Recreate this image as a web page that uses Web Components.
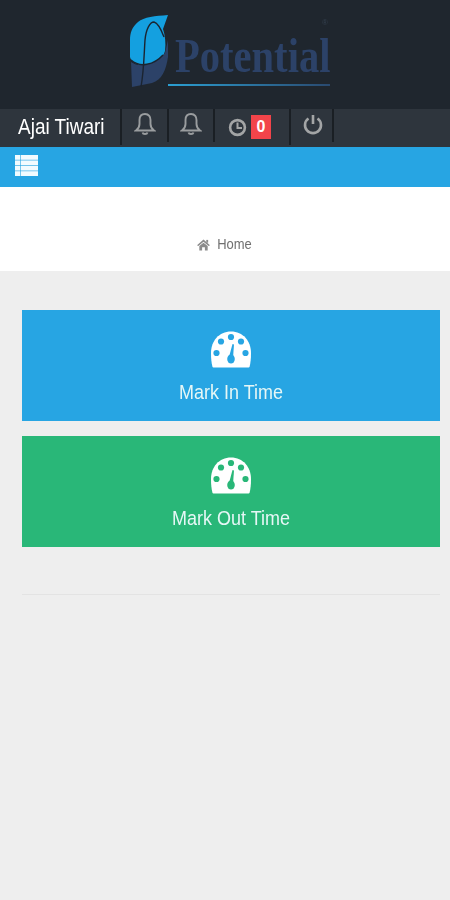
<!DOCTYPE html>
<html>
<head>
<meta charset="utf-8">
<title>Potential</title>
<style>
html, body { margin: 0; padding: 0; }
body { width: 450px; height: 900px; overflow: hidden; background: #eeeeee; font-family: "Liberation Sans", Arial, sans-serif; }
</style>
</head>
<body>
<logo-header></logo-header>
<user-bar name="Ajai Tiwari" count="0"></user-bar>
<menu-bar></menu-bar>
<bread-crumb>Home</bread-crumb>
<main-area>
    <action-tile color="#27a5e3">Mark In Time</action-tile>
    <action-tile color="#29b778">Mark Out Time</action-tile>
</main-area>

<script>
class LogoHeader extends HTMLElement {
    constructor() {
        super();
        this.attachShadow({ mode: "open" });
        this.shadowRoot.innerHTML = `
            <style>
            :host { display: flex; justify-content: center; height: 109px; background: #1f262e; }
            .logo { display: flex; align-items: flex-start; padding: 15px 0 0 10px; filter: blur(.5px); }
            svg { display: block; flex: none; }
            .word { position: relative; margin: 17px 0 0 -2px; width: 162px; }
            .name { display: block; margin-left: 7px; font: bold 48px/48px "Liberation Serif", serif; color: #2c4268; transform: scaleX(.845); transform-origin: left top; white-space: nowrap; height: 48px; }
            .line { height: 2px; margin-top: 4px; background: linear-gradient(90deg, #2b9fd2, #2a4a70); }
            .reg { position: absolute; right: 2px; top: -13px; font: 8px/8px "Liberation Sans", sans-serif; color: #34404f; }
            </style>
            <div class="logo">
                <svg width="40" height="74" viewBox="0 0 40 74">
                    <path d="M38 0 C25 1 14 2 8 7 C2 12 0 18 0 25 L0 42 C1 47 7 50 14 50 C24 50 33 44 35 36 C36 28 35 20 33 14Z" fill="#14a0e0"/>
                    <path d="M1 47 C8 52 22 53 35 38 L38 25 L38 42 C36 55 32 65 22 68 L2 72Z" fill="#2c4268"/>
                    <path d="M11 72 C14 55 14 40 15 25 C16 14 20 7 24 7 C28 8 31 14 34 22 M1 45 C10 53 24 50 33 40" fill="none" stroke="#1b2430" stroke-width="1.400"/>
                </svg>
                <div class="word">
                    <span class="name">Potential</span>
                    <span class="reg">®</span>
                    <div class="line"></div>
                </div>
            </div>
        `;
    }
}

class UserBar extends HTMLElement {
    constructor() {
        super();
        this.attachShadow({ mode: "open" });
        const bell = `<svg width="22" height="24" viewBox="0 0 22 24" fill="none" stroke="#9a9d9f" stroke-width="1.9"><path d="M11 2 C7 2 5.5 5 5.5 8 L5.5 12 C5.5 15 4 17 2 18.5 L20 18.5 C18 17 16.5 15 16.5 12 L16.5 8 C16.5 5 15 2 11 2Z"/><path d="M8.5 20.5 C9 22.5 13 22.5 13.5 20.5"/></svg>`;
        this.shadowRoot.innerHTML = `
            <style>
            :host { display: flex; height: 38px; background: #2e353d; color: #fff; }
            .cell { display: flex; align-items: center; justify-content: center; box-sizing: border-box; height: 33px; border-right: 2px solid #1a1f24; }
            .name { width: 122px; justify-content: flex-start; padding-left: 18px; font-size: 19px; white-space: nowrap; height: 36px; }
            .name span { transform: scaleY(1.12); filter: blur(.4px); }
            .bell { padding-bottom: 3px; }
            .clock { width: 76px; height: 36px; gap: 3px; padding: 0 6px 0 0; }
            .power { width: 43px; padding: 0 0 4px 2px; }
            .badge { width: 20px; height: 24px; background: #f2444a; font: bold 16px/24px "Liberation Sans", sans-serif; text-align: center; }
            svg { display: block; filter: blur(.4px); }
            </style>
            <div class="cell name"><span>${this.getAttribute("name")}</span></div>
            <div class="cell bell" style="width:47px">${bell}</div>
            <div class="cell bell" style="width:46px">${bell}</div>
            <div class="cell clock">
                <svg width="21" height="21" viewBox="0 0 21 21" fill="none" stroke="#a3a5a6" stroke-width="2.6"><circle cx="10.5" cy="10.5" r="7.4"/><path d="M10.5 5.5 V11 H15" stroke-width="2"/></svg>
                <span class="badge">${this.getAttribute("count")}</span>
            </div>
            <div class="cell power">
                <svg width="22" height="24" viewBox="0 0 22 24" fill="none" stroke="#a3a5a6" stroke-width="2.6"><path d="M6.5 6.5 A8 8 0 1 0 15.5 6.5"/><path d="M11 3 V12"/></svg>
            </div>
        `;
    }
}

class MenuBar extends HTMLElement {
    constructor() {
        super();
        this.attachShadow({ mode: "open" });
        this.shadowRoot.innerHTML = `
            <style>
            :host { display: flex; align-items: center; height: 40px; padding: 0 0 0 15px; background: #27a5e3; }
            svg { display: block; margin-bottom: 3px; filter: blur(.3px); }
            </style>
            <svg width="23" height="21" viewBox="0 0 23 21" fill="#f2fbff">
                <rect x="0" y="0" width="5" height="4.800"/><rect x="5.600" y="0" width="17.400" height="4.800"/>
                <rect x="0" y="5.400" width="5" height="4.800"/><rect x="5.600" y="5.400" width="17.400" height="4.800"/>
                <rect x="0" y="10.800" width="5" height="4.800"/><rect x="5.600" y="10.800" width="17.400" height="4.800"/>
                <rect x="0" y="16.200" width="5" height="4.800"/><rect x="5.600" y="16.200" width="17.400" height="4.800"/>
            </svg>
        `;
    }
}

class BreadCrumb extends HTMLElement {
    constructor() {
        super();
        this.attachShadow({ mode: "open" });
        this.shadowRoot.innerHTML = `
            <style>
            :host { display: flex; justify-content: center; align-items: flex-end; box-sizing: border-box; height: 84px; padding: 0 0 18px 0; background: #fff; color: #707070; font-size: 13px; line-height: 16px; }
            .wrap { display: flex; align-items: center; gap: 7px; margin-left: -1px; filter: blur(.5px); }
            span { display: block; transform: scaleY(1.12); }
            svg { display: block; }
            </style>
            <div class="wrap">
                <svg width="13" height="12" viewBox="0 0 14 12" fill="#8b8b8b"><path d="M7 0 L14 6.200 L12.500 7 L7 2.500 L1.500 7 L0 6.200Z"/><path d="M2.500 7.200 L7 3.500 L11.500 7.200 V12 H8.500 V8.500 H5.500 V12 H2.500Z"/><rect x="10" y="0.500" width="2" height="3"/></svg>
                <span><slot></slot></span>
            </div>
        `;
    }
}

class MainArea extends HTMLElement {
    constructor() {
        super();
        this.attachShadow({ mode: "open" });
        this.shadowRoot.innerHTML = `
            <style>
            :host { display: block; box-sizing: border-box; height: 629px; padding: 39px 10px 0 22px; background: #eeeeee; }
            .list { display: flex; flex-direction: column; gap: 15px; }
            hr { border: 0; height: 1px; background: #e3e3e3; margin: 47px 0 0 0; }
            </style>
            <div class="list"><slot></slot></div>
            <hr>
        `;
    }
}

class ActionTile extends HTMLElement {
    constructor() {
        super();
        this.attachShadow({ mode: "open" });
        const color = this.getAttribute("color");
        this.shadowRoot.innerHTML = `
            <style>
            :host { display: flex; flex-direction: column; align-items: center; height: 111px; box-sizing: border-box; padding-top: 21px; background: ${color}; color: #e6f7f6; font-size: 18px; line-height: 24px; }
            svg { display: block; margin-bottom: 12px; filter: blur(.3px); }
            span { display: block; transform: scaleY(1.14); filter: blur(.4px); }
            </style>
            <svg width="42" height="37" viewBox="0 0 42 37">
                <path d="M21 0.500 C9 0.500 1 10 1 22 C1 28 1.500 32 2.500 36 C3 36.500 3.500 36.500 4.500 36.500 H37.500 C38.500 36.500 39 36.500 39.500 36 C40.500 32 41 28 41 22 C41 10 33 0.500 21 0.500Z" fill="#fff"/>
                <g fill="${color}">
                    <circle cx="21" cy="6" r="3.100"/>
                    <circle cx="11" cy="10.500" r="3.100"/>
                    <circle cx="31" cy="10.500" r="3.100"/>
                    <circle cx="6.500" cy="22" r="3.100"/>
                    <circle cx="35.500" cy="22" r="3.100"/>
                    <ellipse cx="21" cy="28" rx="3.800" ry="4.500"/>
                    <path d="M19 26 L22.500 13 L24 13.500 L23 27Z"/>
                </g>
            </svg>
            <span><slot></slot></span>
        `;
    }
}

customElements.define("logo-header", LogoHeader);
customElements.define("user-bar", UserBar);
customElements.define("menu-bar", MenuBar);
customElements.define("bread-crumb", BreadCrumb);
customElements.define("main-area", MainArea);
customElements.define("action-tile", ActionTile);
</script>
</body>
</html>
